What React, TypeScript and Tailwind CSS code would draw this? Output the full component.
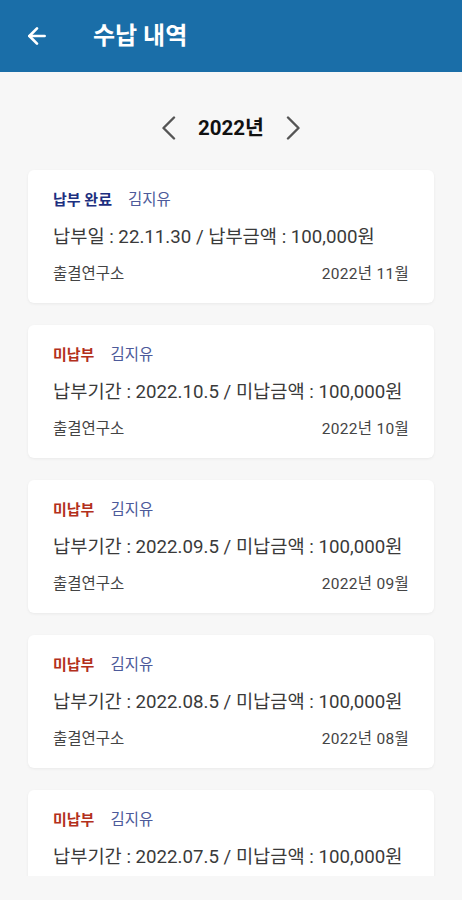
import { ArrowLeft } from "lucide-react";

type Bill = {
  paid: boolean;
  name: string;
  detail: string;
  month: string;
};

const bills: Bill[] = [
  { paid: true, name: "김지유", detail: "납부일 : 22.11.30 / 납부금액 : 100,000원", month: "2022년 11월" },
  { paid: false, name: "김지유", detail: "납부기간 : 2022.10.5 / 미납금액 : 100,000원", month: "2022년 10월" },
  { paid: false, name: "김지유", detail: "납부기간 : 2022.09.5 / 미납금액 : 100,000원", month: "2022년 09월" },
  { paid: false, name: "김지유", detail: "납부기간 : 2022.08.5 / 미납금액 : 100,000원", month: "2022년 08월" },
  { paid: false, name: "김지유", detail: "납부기간 : 2022.07.5 / 미납금액 : 100,000원", month: "2022년 07월" },
];

const Chevron = ({ dir }: { dir: "left" | "right" }) => (
  <svg width="15" height="24" viewBox="0 0 15 24" fill="none" stroke="#555" strokeWidth="2.4" strokeLinecap="round" strokeLinejoin="round">
    {dir === "left" ? <polyline points="13,1.5 2.5,12 13,22.5" /> : <polyline points="2,1.5 12.5,12 2,22.5" />}
  </svg>
);

const BillCard = ({ bill }: { bill: Bill }) => {
  return (
    <div className="mx-[28px] shrink-0 rounded-[6px] bg-white px-[25px] pt-[20px] pb-[19px] shadow-[0_1px_3px_rgba(0,0,0,0.06)]">
      <div className="flex items-center gap-[16px] text-[15px] leading-[20px]">
        {bill.paid ? (
          <span className="font-bold text-[#1d2f7f]">납부 완료</span>
        ) : (
          <span className="font-bold text-[#b3301c]">미납부</span>
        )}
        <span className="text-[15.5px] text-[#4d5a9a]">{bill.name}</span>
      </div>
      <p className="mt-[15px] text-[18.7px] leading-[24px] text-[#3a3a3a]">{bill.detail}</p>
      <div className="mt-[15px] flex items-center justify-between text-[15.5px] leading-[20px] text-[#444]">
        <span>출결연구소</span>
        <span className="tracking-[0.3px]">{bill.month}</span>
      </div>
    </div>
  );
};

export default function App() {
  return (
    <div className="flex h-[900px] w-[462px] flex-col bg-[#f7f7f7] font-['Roboto','Noto_Sans_CJK_KR',sans-serif]">
      <header className="flex h-[72px] shrink-0 items-center bg-[#1a6ea8] text-white">
        <ArrowLeft className="ml-[24px] h-[26px] w-[26px]" strokeWidth={2.5} />
        <h1 className="ml-[43px] text-[24px] font-bold">수납 내역</h1>
      </header>
      <main className="flex h-[804px] flex-col overflow-hidden">
        <div className="mt-[36px] flex h-[40px] shrink-0 items-center justify-center gap-[22px]">
          <Chevron dir="left" />
          <span className="text-[20.5px] font-bold text-[#111]">2022년</span>
          <Chevron dir="right" />
        </div>
        <div className="mt-[22px] flex flex-col gap-[22px]">
          {bills.map((b) => (
            <BillCard key={b.month} bill={b} />
          ))}
        </div>
      </main>
    </div>
  );
}
